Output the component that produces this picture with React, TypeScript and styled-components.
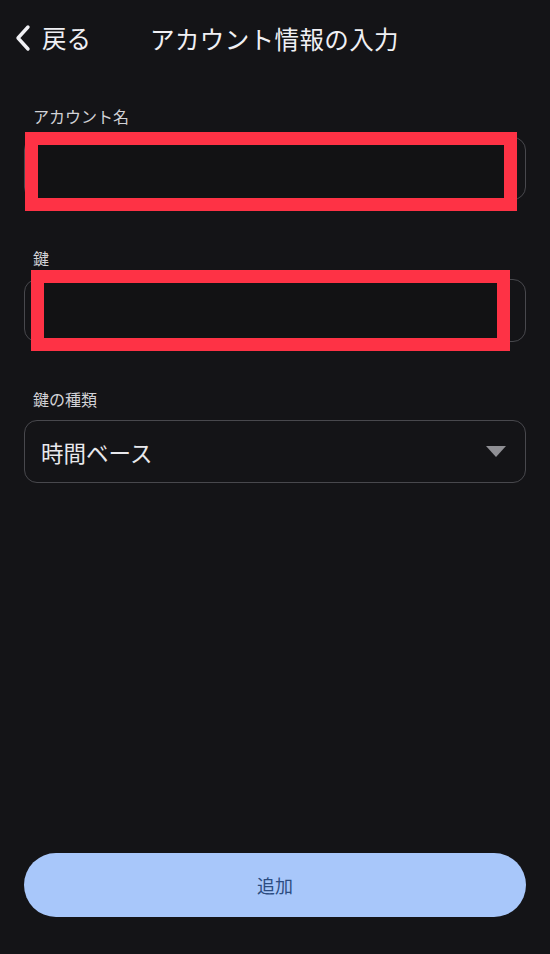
import React from "react";
import styled, { createGlobalStyle } from "styled-components";

const Global = createGlobalStyle`
  html, body { margin: 0; padding: 0; background: #141417; }
  body { font-family: "Noto Sans CJK JP", "Noto Sans", sans-serif; color: #e6e6ea; }
  #root { min-height: 954px; }
`;

const Screen = styled.div`
  width: 550px;
  height: 954px;
  background: #141417;
  display: flex;
  flex-direction: column;
  box-sizing: border-box;
`;

const Header = styled.header`
  height: 76px;
  display: flex;
  align-items: center;
  padding: 0 0 0 13px;
  box-sizing: border-box;
`;

const BackButton = styled.button`
  display: flex;
  align-items: center;
  gap: 9px;
  background: none;
  border: 0;
  padding: 0;
  color: #f0f0f4;
  font-family: inherit;
  font-size: 24.5px;
  line-height: 1;
  cursor: pointer;
`;

const Title = styled.h1`
  margin: 0 0 0 59px;
  font-size: 24.5px;
  font-weight: 400;
  color: #f0f0f4;
  letter-spacing: 0.4px;
`;

const Form = styled.div`
  display: flex;
  flex-direction: column;
  padding: 30px 24px 0;
`;

const Group = styled.div<{ $gap?: number }>`
  display: flex;
  flex-direction: column;
  margin-bottom: ${(p) => p.$gap ?? 44}px;
`;

const Label = styled.label`
  font-size: 16px;
  color: #d2d2d6;
  padding-left: 9px;
  margin-bottom: 11px;
  line-height: 20px;
`;

const Field = styled.div`
  position: relative;
  height: 63px;
  border: 1.5px solid #48484d;
  border-radius: 13px;
  box-sizing: border-box;
  display: flex;
  align-items: center;
  padding: 0 18px 0 16px;
`;

const FieldText = styled.span`
  font-size: 22.5px;
  color: #e8e8ec;
  flex: 1;
`;

const Caret = styled.span`
  width: 0;
  height: 0;
  border-left: 10px solid transparent;
  border-right: 10px solid transparent;
  border-top: 11px solid #8f8f94;
  margin-right: 1px;
`;

const Redaction = styled.div<{ $l: number; $t: number; $w: number; $h: number }>`
  position: absolute;
  left: ${(p) => p.$l}px;
  top: ${(p) => p.$t}px;
  width: ${(p) => p.$w}px;
  height: ${(p) => p.$h}px;
  border: 13px solid #fe3245;
  box-sizing: border-box;
  background: #121214;
`;

const Footer = styled.div`
  margin-top: auto;
  padding: 0 24px 37px;
`;

const AddButton = styled.button`
  width: 100%;
  height: 64px;
  border: 0;
  border-radius: 32px;
  background: #a8c7fa;
  color: #2c4c80;
  font-family: inherit;
  font-size: 18px;
  cursor: pointer;
`;

export default function App() {
  return (
    <>
      <Global />
      <Screen>
        <Header>
          <BackButton>
            <svg width="20" height="28" viewBox="0 0 20 28" fill="none">
              <path d="M15 3 L5 14 L15 25" stroke="#f0f0f4" strokeWidth="3.4" strokeLinecap="round" strokeLinejoin="round" />
            </svg>
            戻る
          </BackButton>
          <Title>アカウント情報の入力</Title>
        </Header>
        <Form>
          <Group $gap={48}>
            <Label>アカウント名</Label>
            <Field>
              <Redaction $l={0} $t={-6} $w={492} $h={79} />
            </Field>
          </Group>
          <Group $gap={47}>
            <Label>鍵</Label>
            <Field>
              <Redaction $l={6} $t={-10} $w={479} $h={81} />
            </Field>
          </Group>
          <Group>
            <Label>鍵の種類</Label>
            <Field>
              <FieldText>時間ベース</FieldText>
              <Caret />
            </Field>
          </Group>
        </Form>
        <Footer>
          <AddButton>追加</AddButton>
        </Footer>
      </Screen>
    </>
  );
}
